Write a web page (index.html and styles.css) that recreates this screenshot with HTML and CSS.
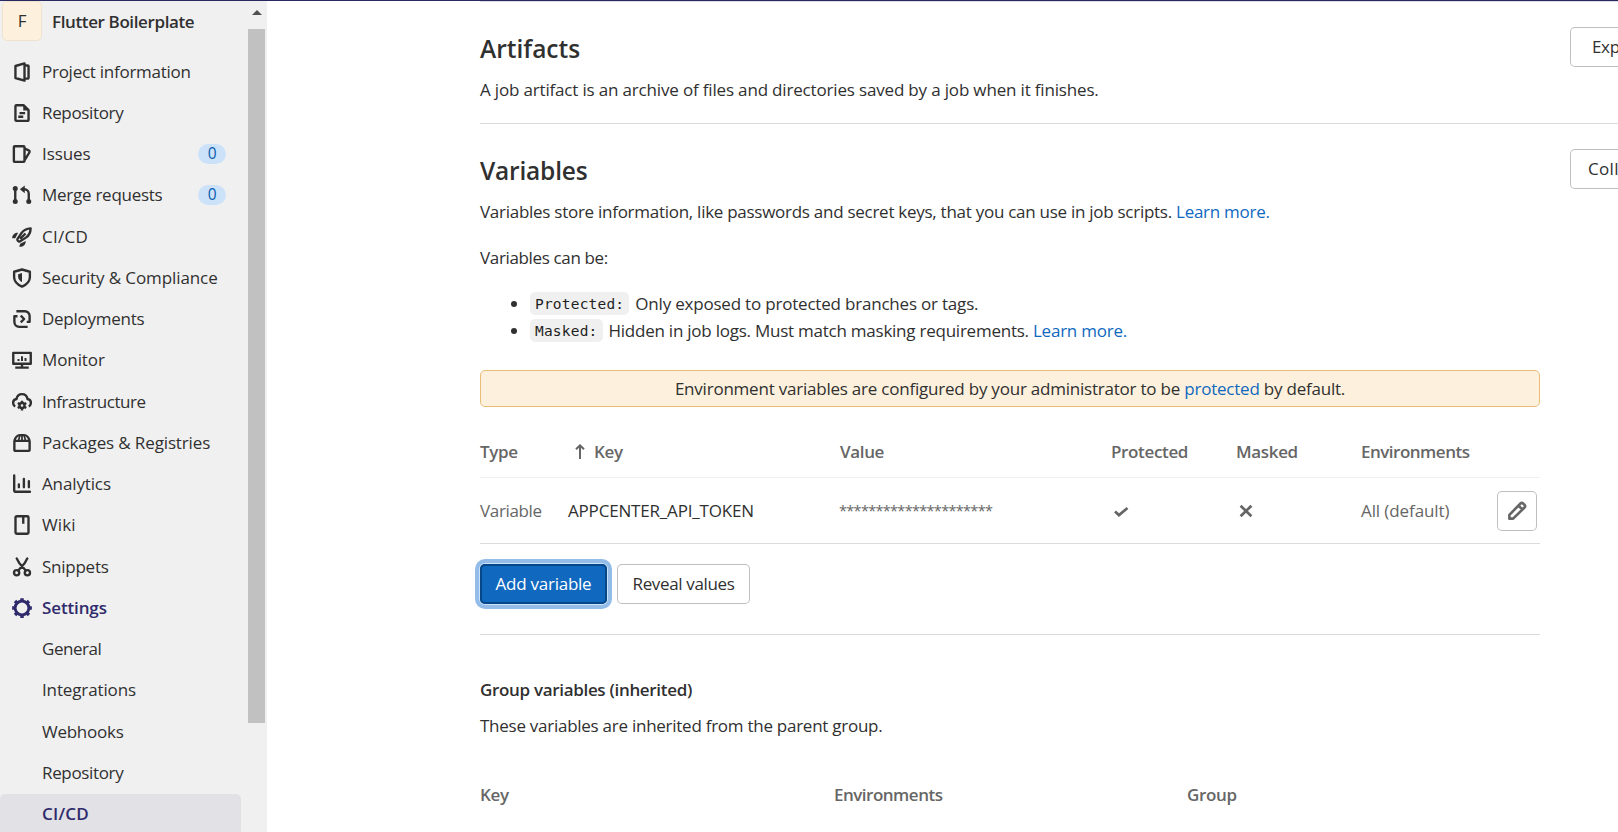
FILE: index.html
```html
<!DOCTYPE html>
<html lang="en">
<head>
<meta charset="utf-8">
<title>CI/CD Settings · Flutter Boilerplate</title>
<link rel="stylesheet" href="styles.css">
</head>
<body>
<div class="topbar"></div>
<div class="page">
  <aside class="sidebar">
    <nav class="nav">
      <a class="project"><span class="avatar">F</span><span class="project-name">Flutter Boilerplate</span></a>
      <a class="item"><svg class="icon" viewBox="0 0 16 16"><path d="M2.75 3.200 10 1.100v13.800l-7.250-2.100zM10 2.750h2.500a.75.75 0 0 1 .75.75v9a.75.75 0 0 1-.75.75H10"/></svg><span class="t-info">Project information</span></a>
      <a class="item"><svg class="icon" viewBox="0 0 16 16"><path d="M2.75 2.5a.75.75 0 0 1 .75-.75h5.7l4.05 4v7.75a.75.75 0 0 1-.75.75h-9a.75.75 0 0 1-.75-.75zM6 8.100h4.500M5 11h4"/><path class="solid" d="M9 2v4h4.2z"/></svg><span class="t-repo">Repository</span></a>
      <a class="item"><svg class="icon" viewBox="0 0 16 16"><path d="M1.500 2.500a.75.75 0 0 1 .75-.75h7a.75.75 0 0 1 .75.75v11a.75.75 0 0 1-.75.75h-7a.75.75 0 0 1-.75-.75zM10.300 3.600l3.300 1.700a1 1 0 0 1 .4 1.300L10.400 12.500"/></svg><span class="t-issues">Issues</span><span class="count">0</span></a>
      <a class="item"><svg class="icon" viewBox="0 0 16 16"><path d="M2.6 3v10M13.4 13V7a3.6 3.6 0 0 0-3.6-3.6H8.6"/><path class="solid" d="M10.2.3v6.200L6.300 3.4z"/><circle class="solid" cx="2.6" cy="2.7" r="2"/><circle class="solid" cx="2.6" cy="13.2" r="2"/><circle class="solid" cx="13.4" cy="13.2" r="2"/></svg><span class="t-merge">Merge requests</span><span class="count">0</span></a>
      <a class="item"><svg class="icon" viewBox="0 0 16 16"><path d="M14.900 1.100c-3.600.2-5.500 1.300-7.200 3.600L4.400 9.500c-.6 1 .900 2.600 2.100 2l4.900-3.200c2.300-1.700 3.400-3.600 3.500-7.200zM6.500 9.500l4.300-4.300"/><path class="solid" d="M4.900 4.600 2.600 8.900H.2C.1 6.300 2 4.600 4.900 4.600zM11 11.200l-4.500 2.200L5.800 15.800c3 .3 5.200-1.500 5.200-4.600z"/></svg><span class="t-cicd">CI/CD</span></a>
      <a class="item"><svg class="icon" viewBox="0 0 16 16"><path d="M8 1.200 1.700 3v4.300c0 3.600 3.200 6.100 6.300 7.600 3.100-1.500 6.300-4 6.300-7.600V3z"/><path class="solid" d="M8 4v7.300C6 10 4.900 8.800 4.900 7V5z"/></svg><span class="t-sec">Security &amp; Compliance</span></a>
      <a class="item"><svg class="icon" viewBox="0 0 16 16"><path d="M3.500 1.750h6.800a3.800 3.800 0 0 1 3.800 3.800v4.700h-2.300M12.500 14.250H5.700a3.800 3.800 0 0 1-3.800-3.800v-4.700h2.500M7 5.300 9.700 8 7 10.700"/></svg><span class="t-dep">Deployments</span></a>
      <a class="item"><svg class="icon" viewBox="0 0 16 16"><path d="M1 2.250h14v8.700H1zM8 11v3M2.600 14.100h10.800"/><path class="mid" d="M5.200 7.100v1.700M8 5v3.800M10.800 6.300v2.500"/></svg><span class="t-mon">Monitor</span></a>
      <a class="item"><svg class="icon" viewBox="0 0 16 16"><path d="M2.600 11.500C1.500 11 .9 10 .9 8.700c0-1.700 1.200-2.900 2.700-3.100C4 3.300 5.800 1.700 8 1.700s4 1.600 4.400 3.900c1.500.2 2.700 1.400 2.700 3.100 0 1.300-.6 2.300-1.700 2.800"/><circle cx="8" cy="10.800" r="2"/><path d="M8 6.900v2M8 12.700v2M4.600 8.850l1.700 1M9.700 11.750l1.700 1M4.600 12.750l1.700-1M9.700 9.850l1.700-1"/></svg><span class="t-inf">Infrastructure</span></a>
      <a class="item"><svg class="icon" viewBox="0 0 16 16"><path d="M1.900 6.300h12.200v7.200a.75.75 0 0 1-.75.75H2.650a.75.75 0 0 1-.75-.75zM1.900 6.300C2.500 3.700 4.400 1.700 6.300 1.700h3.400c1.900 0 3.800 2 4.400 4.600"/><path class="thin" d="M8 1.700v4M6.300 1.900 5.300 5.700M9.700 1.900l1 3.800"/></svg><span class="t-pkg">Packages &amp; Registries</span></a>
      <a class="item"><svg class="icon" viewBox="0 0 16 16"><path class="round" d="M1.750 1.200v11.700a1.300 1.300 0 0 0 1.300 1.300h11.300M5.500 8.300v2.200M9.500 4v6.500M13.500 5.700v4.800"/></svg><span class="t-ana">Analytics</span></a>
      <a class="item"><svg class="icon" viewBox="0 0 16 16"><path d="M2.800 2a1 1 0 0 1 1-1h8.400a1 1 0 0 1 1 1v12a1 1 0 0 1-1 1H3.800a1 1 0 0 1-1-1zM9 1v6"/></svg><span class="t-wiki">Wiki</span></a>
      <a class="item"><svg class="icon" viewBox="0 0 16 16"><circle cx="3.700" cy="12.600" r="2.100"/><circle cx="12.300" cy="12.600" r="2.100"/><path class="round" d="M3.800 1.200 5.900 5l5.100 5.800M12.200 1.200 10.100 5 5 10.800"/></svg><span class="t-snip">Snippets</span></a>
      <a class="item current"><svg class="icon" viewBox="0 0 16 16"><circle class="gear" cx="8" cy="8" r="5.500"/><path class="teeth" d="M8 .1v2.600M8 13.300v2.600M.1 8h2.600M13.300 8h2.600M2.400 2.400l1.700 1.700M11.900 11.900l1.700 1.700M2.400 13.600l1.700-1.700M11.900 4.100l1.700-1.700"/></svg><span class="t-set">Settings</span></a>
      <a class="item sub"><span class="t-gen">General</span></a>
      <a class="item sub"><span class="t-int">Integrations</span></a>
      <a class="item sub"><span class="t-web">Webhooks</span></a>
      <a class="item sub"><span class="t-repo">Repository</span></a>
      <a class="item sub current active"><span class="t-cicd">CI/CD</span></a>
    </nav>
    <div class="scrollbar"><span class="arrow-up"></span><span class="thumb"></span></div>
  </aside>

  <main class="main">
    <section class="section artifacts">
      <div class="copy">
        <h4>Artifacts</h4>
        <p class="t-job">A job artifact is an archive of files and directories saved by a job when it finishes.</p>
      </div>
      <button class="btn toggle expand">Expand</button>
    </section>
    <section class="section variables">
      <div class="copy">
        <h4 class="t-vars">Variables</h4>
        <p class="t-store">Variables store information, like passwords and secret keys, that you can use in job scripts. <a class="link">Learn more.</a></p>
      </div>
      <button class="btn toggle collapse">Collapse</button>
    </section>

    <div class="content">
      <p class="lead">Variables can be:</p>
      <ul class="kinds">
        <li><code>Protected:</code><span class="t-li1">Only exposed to protected branches or tags.</span></li>
        <li><code>Masked:</code><span class="t-li2">Hidden in job logs. Must match masking requirements. <a class="link">Learn more.</a></span></li>
      </ul>
      <div class="alert"><span class="t-alert">Environment variables are configured by your administrator to be <a class="link">protected</a> by default.</span></div>

      <div class="row head">
        <span>Type</span>
        <span class="sort"><svg class="arrow" viewBox="0 0 12 18"><path d="M6 16V2.300M2 6.300l4-4 4 4"/></svg><span>Key</span></span>
        <span>Value</span>
        <span>Protected</span>
        <span>Masked</span>
        <span class="t-env">Environments</span>
      </div>
      <div class="row body">
        <span>Variable</span>
        <span class="key">APPCENTER_API_TOKEN</span>
        <span class="stars">*********************</span>
        <svg class="mark" viewBox="0 0 20 20"><path d="M4 10.500l4 3.600L16.500 7"/></svg>
        <svg class="mark" viewBox="0 0 20 20"><path d="M4.600 4.700 15.400 15.300M15.400 4.700 4.600 15.300"/></svg>
        <span class="t-all">All (default)</span>
        <button class="btn edit" aria-label="Edit"><svg class="icon" viewBox="0 0 16 16"><path d="M1.900 14.100v-3L10.800 2a1.500 1.500 0 0 1 2.100 0l1.100 1.100a1.500 1.500 0 0 1 0 2.100L4.900 14.100zM9.200 3.700l3.100 3.100"/></svg></button>
      </div>
      <div class="actions">
        <button class="btn primary">Add variable</button>
        <button class="btn reveal">Reveal values</button>
      </div>
      <div class="group">
        <h5>Group variables (inherited)</h5>
        <p class="t-these">These variables are inherited from the parent group.</p>
        <div class="group-head"><span>Key</span><span class="t-env">Environments</span><span>Group</span></div>
      </div>
    </div>
  </main>
</div>
</body>
</html>
```

FILE: styles.css
```css
* { box-sizing: border-box; }
html, body { height: 100%; }
body {
  margin: 0;
  overflow: hidden;
  background: #fff;
  color: #303030;
  font: 17px/26px "Open Sans", "Noto Sans", sans-serif;
  display: flex;
  flex-direction: column;
  white-space: nowrap;
  letter-spacing: -0.35px;
}
h4, h5, p, ul { margin: 0; }
.topbar { flex: none; height: 1px; background: #292961; }
.page { flex: 1; display: flex; min-height: 0; }

.sidebar { flex: none; width: 267px; background: #f0f0f0; display: flex; overflow: hidden; }
.nav { width: 248px; }
.project { display: flex; align-items: center; height: 50px; padding: 0 0 10px 2px; font-weight: 600; }
.project-name { padding-top: 1px; letter-spacing: -0.38px; }
.avatar {
  width: 40px; height: 40px; border-radius: 5px; background: #fdf1dd;
  border: 1px solid #efe3d0; display: grid; place-items: center;
  font-weight: 400; margin-right: 10px;
}
.item { display: flex; align-items: center; height: 41.25px; padding-left: 12px; width: 241px; }
.icon { width: 20px; height: 20px; flex: none; margin-right: 10px; fill: none; stroke: currentColor; stroke-width: 1.9; stroke-linejoin: round; }
.icon .solid { fill: currentColor; stroke: none; }
.icon .round { stroke-linecap: round; }
.icon .thin { stroke-width: 1.4; }
.icon .mid { stroke-width: 1.6; }
.icon .gear { stroke-width: 2.3; }
.icon .teeth { stroke-width: 2.8; }
.sub { padding-left: 42px; }
.current { color: #2f2a6b; font-weight: 600; }
.active { background: #e1e1e6; border-radius: 5px; }
.count {
  margin-left: auto; margin-right: 15px; width: 28px; height: 20px; border-radius: 10px;
  background: #cbe2f9; color: #0b5cad; font-size: 15.500px; line-height: 19px; text-align: center;
}
.t-info, .t-merge, .t-dep, .t-web { letter-spacing: -0.26px; }
.t-issues { letter-spacing: -0.45px; }
.t-issues { letter-spacing: -0.1px; }
.t-cicd { letter-spacing: 0.25px; }
.t-sec { letter-spacing: -0.1px; }
.t-mon { letter-spacing: -0.1px; }
.t-inf { letter-spacing: -0.45px; }
.t-pkg, .t-ana, .t-set, .t-int { letter-spacing: -0.13px; }
.t-wiki { letter-spacing: 0.15px; }
.t-snip { letter-spacing: -0.25px; }
.t-gen { letter-spacing: -0.45px; }

.scrollbar { width: 17px; display: flex; flex-direction: column; align-items: center; }
.arrow-up { margin: 9px 0 14px; border: 5px solid transparent; border-top: 0; border-bottom-color: #505050; }
.thumb { width: 17px; height: 694px; background: #c1c1c1; }

.main { flex: 1; min-width: 0; padding-left: 213px; overflow: hidden; }
.section { display: flex; border-top: 1px solid #dbdbdb; height: 122px; }
.artifacts { border-top-color: #dbdbe6; }
.copy { flex: none; width: 1090px; padding-top: 30px; }
h4 { font-size: 24.500px; line-height: 34px; font-weight: 600; margin-bottom: 11px; letter-spacing: 0; }
.t-vars { letter-spacing: -0.2px; }
.t-job { letter-spacing: -0.17px; }
.t-store { letter-spacing: -0.27px; }
.t-li1 { letter-spacing: -0.2px; }
.t-li2 { letter-spacing: -0.24px; }
.t-alert { letter-spacing: -0.22px; }
.t-env { letter-spacing: -0.5px; }
.t-all { letter-spacing: -0.1px; }
.t-these { letter-spacing: -0.26px; }
.btn {
  font: inherit; color: #303030; letter-spacing: inherit; background: #fff;
  border: 0; box-shadow: inset 0 0 0 1px #bfbfbf; border-radius: 5px; height: 40px; padding: 0;
}
.toggle { flex: none; width: 98px; margin-top: 25px; text-align: left; }
.expand { padding-left: 22px; }
.collapse { padding-left: 18px; letter-spacing: 0.3px; }
.link { color: #1068bf; }

.content { width: 1060px; }
.kinds { list-style: none; padding: 19px 0 0 30px; }
.kinds li { display: flex; align-items: center; height: 27px; }
.kinds li::before { content: ""; width: 6px; height: 6px; border-radius: 50%; background: #303030; margin: 0 13px 0 1px; }
code {
  font: 14.500px/25px "DejaVu Sans Mono", monospace; letter-spacing: 0.2px;
  background: #f0f0f0; color: #1f1f1f; border-radius: 5px; padding: 0 5px; margin-right: 5px; height: 23px;
}
code + span { margin-left: 1px; }
.alert {
  margin-top: 26px; height: 37px; border: 1px solid #e9be74; border-radius: 5px;
  background: #fdf1dd; display: grid; place-items: center;
}
.row { display: grid; grid-template-columns: 88px 272px 271px 125px 125px 136px 40px; align-items: center; }
.head { height: 71px; padding-top: 20px; border-bottom: 1px solid #f0f0f0; color: #666; font-weight: 600; }
.body { height: 66px; border-bottom: 1px solid #dbdbdb; color: #666; }
.sort { display: flex; align-items: center; padding-left: 6px; gap: 8px; }
.arrow { width: 12px; height: 18px; fill: none; stroke: #666; stroke-width: 2; }
.key { color: #303030; letter-spacing: -0.18px; }
.stars { font-size: 14.500px; letter-spacing: -0.69px; margin-left: -1px; }
.mark { width: 20px; height: 20px; fill: none; stroke: #666; stroke-width: 2.7; }
.edit { width: 40px; display: grid; place-items: center; color: #666; }
.edit .icon { margin: 0; stroke-width: 2.1; }
.actions { display: flex; gap: 10px; padding: 20px 0 30px; border-bottom: 1px solid #dbdbdb; }
.primary {
  width: 127px; background: #1068bf; color: #fff; letter-spacing: -0.25px;
  box-shadow: inset 0 0 0 2px #064787, 0 0 0 1px #cbe2f9, 0 0 0 5px #93bde8;
}
.reveal { width: 133px; }
h5 { font-size: 17px; line-height: 26px; font-weight: 600; letter-spacing: -0.32px; }
.group { padding-top: 42px; }
.group p { margin-top: 10px; }
.group-head { display: grid; grid-template-columns: 354px 353px 353px; margin-top: 43px; color: #666; font-weight: 600; }
```
